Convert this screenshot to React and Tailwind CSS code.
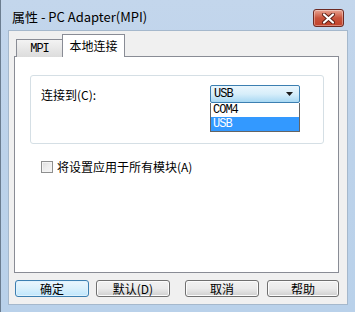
import React from "react";

const cjk = { fontFamily: '"Noto Sans CJK SC", "Liberation Sans", sans-serif' };
const mono = { fontFamily: '"Liberation Mono", "Noto Sans CJK SC", monospace' };

const CloseButton = () => (
  <div className="w-[31px] h-[18px] rounded-[3px] border border-[#6d2a23] bg-gradient-to-b from-[#e8a493] via-[#c8533c] to-[#c2412a] flex items-center justify-center shadow-[inset_0_0_0_1px_rgba(255,255,255,0.35)]">
    <svg width="13" height="11" viewBox="0 0 13 11">
      <path
        d="M2 1.5 L11 9.5 M11 1.5 L2 9.5"
        stroke="#5b1d14"
        strokeWidth="4"
        strokeLinecap="round"
      />
      <path
        d="M2 1.5 L11 9.5 M11 1.5 L2 9.5"
        stroke="#ffffff"
        strokeWidth="2.2"
        strokeLinecap="round"
      />
    </svg>
  </div>
);

const DialogButton = ({ children, primary, className = "" }) => (
  <div
    className={`h-[17px] rounded-[3px] border flex items-center justify-center text-[12px] leading-none text-black ${
      primary
        ? "border-[#3c7fb1] bg-gradient-to-b from-[#eaf6fd] via-[#d9f0fc] to-[#bee6fd] shadow-[inset_0_0_0_1px_#dff2fd]"
        : "border-[#707070] bg-gradient-to-b from-[#f2f2f2] via-[#ebebeb] to-[#cfcfcf] shadow-[inset_0_0_0_1px_#fcfcfc]"
    } ${className}`}
    style={cjk}
  >
    {children}
  </div>
);

const App = () => {
  return (
    <div className="w-[355px] h-[312px] flex flex-col bg-gradient-to-b from-[#c3d6ec] via-[#bcd2ea] to-[#b9d1ea] border-l border-[#6b7d90] overflow-hidden">
      {/* title bar */}
      <div className="h-[30px] flex items-start justify-between pl-[11px] pr-[11px]">
        <div className="pt-[8px] text-[13px] leading-[18px] text-black" style={cjk}>
          属性 - PC Adapter(MPI)
        </div>
        <div className="pt-[9px]">
          <CloseButton />
        </div>
      </div>

      {/* client area */}
      <div className="flex-1 ml-[7px] mr-[7px] mb-[7px] bg-[#f0f0f0] border border-[#a5b8cc] flex flex-col">
        {/* tabs */}
        <div className="flex items-end pt-[2px] pl-[7px] h-[25px] relative z-10">
          <div
            className="w-[47px] h-[18px] border border-b-0 border-[#898c95] bg-gradient-to-b from-[#f3f3f3] to-[#dcdcdc] flex items-center justify-center text-[12px] tracking-[-1px] text-black mb-[-1px]"
            style={mono}
          >
            MPI
          </div>
          <div
            className="w-[63px] h-[23px] border border-b-0 border-[#898c95] bg-white flex items-center justify-center text-[12px] text-black mb-[-1px] -ml-[1px]"
            style={cjk}
          >
            本地连接
          </div>
        </div>

        {/* panel */}
        <div className="ml-[5px] w-[325px] h-[217px] border border-[#898c95] bg-white flex flex-col">
          <div className="mt-[18px] ml-[15px] w-[294px] h-[69px] rounded-[3px] border border-[#d5dfe5] flex items-start relative">
            <div className="mt-[11px] ml-[10px] text-[12px] leading-[16px] text-black" style={cjk}>
              连接到(C):
            </div>
            <div className="absolute left-[179px] top-[9px] w-[90px]">
              <div className="h-[18px] rounded-[2px] border border-[#3c7fb1] bg-gradient-to-b from-[#eaf6fd] via-[#d7eefa] to-[#a8d8f3] flex items-center justify-between pl-[3px] pr-[6px]">
                <span className="text-[12px] tracking-[-1px] text-black leading-none" style={mono}>
                  USB
                </span>
                <svg width="7" height="4" viewBox="0 0 7 4">
                  <path d="M0 0 H7 L3.5 4 Z" fill="#1b1b1b" />
                </svg>
              </div>
              <div className="border border-[#646464] border-t-0 bg-white">
                <div className="h-[14px] pl-[2px] flex items-center text-[12px] tracking-[-1px] text-black leading-none" style={mono}>
                  COM4
                </div>
                <div className="h-[14px] pl-[2px] flex items-center text-[12px] tracking-[-1px] text-white bg-[#3399ff] leading-none" style={mono}>
                  USB
                </div>
              </div>
            </div>
          </div>

          <div className="mt-[15px] ml-[26px] flex items-center gap-[4px]">
            <div className="w-[12px] h-[12px] border border-[#8e8f8f] bg-gradient-to-br from-[#dcdcdc] via-[#eeeeee] to-[#f6f6f6] shadow-[inset_0_0_0_1px_#f4f4f4]" />
            <span className="text-[12px] leading-[16px] text-black" style={cjk}>
              将设置应用于所有模块(A)
            </span>
          </div>
        </div>

        {/* buttons */}
        <div className="mt-[7px] flex items-center pl-[6px]">
          <DialogButton primary className="w-[74px]">确定</DialogButton>
          <DialogButton className="w-[74px] ml-[7px]">默认(D)</DialogButton>
          <DialogButton className="w-[74px] ml-[15px]">取消</DialogButton>
          <DialogButton className="w-[72px] ml-[8px]">帮助</DialogButton>
        </div>
      </div>
    </div>
  );
};

export default App;
